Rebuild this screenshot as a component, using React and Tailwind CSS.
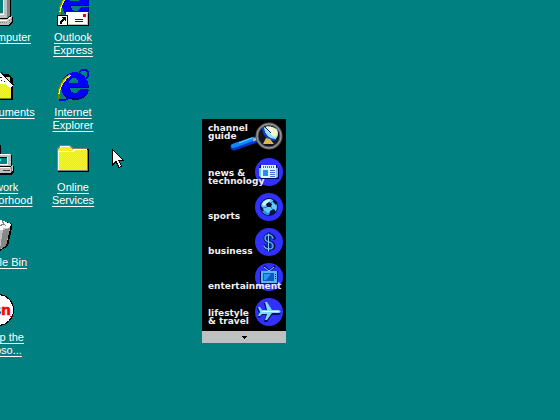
import React from "react";

const svgProps = {
  width: 32,
  height: 32,
  viewBox: "0 0 32 32",
  shapeRendering: "crispEdges",
  "aria-hidden": true,
};

function Dither({ id, a, b }) {
  return (
    <defs>
      <pattern id={id} width="2" height="2" patternUnits="userSpaceOnUse">
        <rect width="2" height="2" fill={a} />
        <rect width="1" height="1" fill={b} />
        <rect x="1" y="1" width="1" height="1" fill={b} />
      </pattern>
    </defs>
  );
}

function ExplorerMark() {
  return (
    <>
      <path d="M22 3 L25 1 L29 1 L31 3 L31 7 L29 10" fill="none" stroke="#0000d0" strokeWidth="1.5" />
      <path
        fillRule="evenodd"
        fill="#000090"
        d="M18 4 C26 4 32 10 32 19 H13 V20 Q14 24 18 24 Q21 24 23 21 H32 C31 27 26 31 18 31 C9 31 4 26 4 18 C4 9 10 4 18 4 Z M11 14 H22 Q22 9 17 9 Q12 9 11 14 Z"
      />
      <path
        fillRule="evenodd"
        fill="#0000ff"
        d="M18 3 C26 3 31 9 31 18 H12 Q12 24 18 24 Q21 24 23 20 H31 C30 26 25 29 18 29 C9 29 4 25 4 17 C4 9 10 3 18 3 Z M12 14 H21 Q21 9 17 9 Q13 9 12 14 Z"
      />
      <path d="M2 31 L8 31 L12 29" fill="none" stroke="#0000d0" strokeWidth="1.5" />
      <path d="M13 5 Q3 11 1 20 L1 28 L2 31 L3 28 L3 22 Q6 13 13 5Z" fill="#808000" />
      <path d="M14 6 Q9 9 6 14 L3 20 L2 25" fill="none" stroke="#ffff40" strokeWidth="1.2" />
      <path d="M13 6 Q8 9 4 16" fill="none" stroke="#c0c000" strokeWidth="1" />
    </>
  );
}

function ComputerIcon() {
  return (
    <svg {...svgProps}>
      <path d="M5 2 H26 L29 5 V22 L26 25 H5Z" fill="#000" />
      <path d="M4 1 H25 L28 4 V21 L25 24 H4Z" fill="#808080" />
      <path d="M4 1 H25 V24 H4Z" fill="#c0c0c0" />
      <path d="M4 2 H24 M5 1 V23" stroke="#fff" />
      <rect x="8" y="5" width="13" height="14" fill="#008080" />
      <path d="M21 4 V20 H8" fill="none" stroke="#fff" />
      <path d="M8 20 V5 H20" fill="none" stroke="#404040" />
      <path d="M2 26 H27 L31 23 V29 L27 32 H2Z" fill="#000" />
      <path d="M2 25 H26 L30 22 V28 L26 31 H2Z" fill="#c0c0c0" />
      <path d="M2 26 H25 L29 23" fill="none" stroke="#fff" />
      <path d="M14 28 H25 M27 26 V30 M29 25 V28" stroke="#808080" strokeDasharray="1 1" />
    </svg>
  );
}

function OutlookIcon() {
  return (
    <svg {...svgProps}>
      <g transform="translate(1 -7)">
        <ExplorerMark />
      </g>
      <rect x="10" y="19" width="22" height="13" fill="#000" />
      <rect x="9" y="18" width="22" height="13" fill="#fff" />
      <path d="M10 30.500 H31 M30.500 19 V31" stroke="#c0c0c0" />
      <rect x="26" y="20" width="3" height="3" fill="#f00" />
      <path d="M18 25.500 H26 M18 27.500 H26" stroke="#0000ff" />
      <rect x="0" y="21" width="11" height="11" fill="#000" />
      <rect x="1" y="22" width="9" height="9" fill="#fff" />
      <path d="M4 23 H9 V28 L7 26 L5 28 V30 H3 V27 L6 25Z" fill="#000" />
    </svg>
  );
}

function DocumentsIcon() {
  return (
    <svg {...svgProps}>
      <Dither id="docs" a="#f8f430" b="#d4d4b8" />
      <path d="M4 5 H27 L31 10 V31 H4Z" fill="#000" />
      <path d="M3 8 H28 V30 H3Z" fill="#d8d860" />
      <path d="M8 3 L19 4 L26 12 L31 16 L28 20 L10 16Z" fill="#fff" />
      <path d="M19 3 L26 11 L32 16" fill="none" stroke="#000" />
      <path d="M17 7 L20 9 M17 10 L23 13" stroke="#0000ff" strokeDasharray="1 1" />
      <path d="M3 15 H23 L27 18 H29 V30 H3Z" fill="url(#docs)" />
      <path d="M27 13 L31 16 L28 19 L27 17Z" fill="#fff" />
      <path d="M3 14.500 H22" fill="none" stroke="#fff" />
      <path d="M3 29.500 H29" stroke="#808000" />
    </svg>
  );
}

function ExplorerIcon() {
  return (
    <svg {...svgProps}>
      <ExplorerMark />
    </svg>
  );
}

function NetworkIcon() {
  return (
    <svg {...svgProps}>
      <path d="M3 2 H18 V14 H3Z" fill="#c0c0c0" />
      <path d="M18.500 1 V10" stroke="#000" />
      <path d="M10 11 H30 V23 H10Z" fill="#000" />
      <path d="M10 10 H28 L29 11 V22 H10Z" fill="#c0c0c0" />
      <path d="M10 10.500 H28" stroke="#fff" />
      <rect x="12" y="13" width="13" height="7" fill="#008080" />
      <path d="M12 20 V13 H25" fill="none" stroke="#000" />
      <path d="M25.500 13 V20.500 H13" fill="none" stroke="#fff" />
      <rect x="17" y="15" width="2" height="2" fill="#00ffff" />
      <path d="M8 24 H29 L32 22 V28 L29 31 H8Z" fill="#000" />
      <path d="M8 23 H28 L31 21 V27 L28 29 H8Z" fill="#c0c0c0" />
      <path d="M8 23.500 H28" stroke="#fff" />
      <path d="M21 26.500 H28" stroke="#404040" />
      <path d="M29.500 23 V28" stroke="#808080" />
    </svg>
  );
}

function FolderIcon() {
  return (
    <svg {...svgProps}>
      <Dither id="folder" a="#f8f430" b="#d4d4b8" />
      <path d="M1 5 L4 2 H14 L17 5 H31 L32 6 V28 H1Z" fill="#000" />
      <path d="M0 5 L3 1 H13 L16 4 H30 V27 H0Z" fill="#808080" />
      <path d="M1 5 L4 2 H12 L15 5 H30 V26 H1Z" fill="url(#folder)" />
      <path d="M1.500 26 V7.500 H16 L18 5.500 H30 M3 3.500 L4 2.500 H12" fill="none" stroke="#fff" />
      <path d="M1 26.500 H31 M30.500 6 V27" stroke="#808080" />
    </svg>
  );
}

function BinIcon() {
  return (
    <svg {...svgProps}>
      <path d="M3 7 L10 3 L19 1 L30 5 L30 9 L26 27 L18 32 L7 29Z" fill="#000" />
      <path d="M3 7 L10 3 L19 1 L29 5 L28 10 L24 27 L17 31 L7 28Z" fill="#c0c0c0" />
      <path d="M21 11 L28 9 L24 27 L18 30Z" fill="#888888" />
      <path d="M4 7 L10 3 L19 1 L29 5 L28 8 L20 11Z" fill="#fff" />
      <path d="M17 7 L22 5 L24 7 M20 2 L22 5" fill="none" stroke="#808080" />
      <path d="M21 9.500 H26" stroke="#c0c0c0" />
    </svg>
  );
}

function MsnIcon() {
  return (
    <svg {...svgProps}>
      <circle cx="16" cy="16" r="16" fill="#000" />
      <circle cx="16" cy="16" r="15" fill="#fff" />
      <g fontFamily="'DejaVu Sans', sans-serif" fontWeight="bold" fontSize="14">
        <text x="11" y="21">s</text>
        <text x="19" y="21" fill="#f00" stroke="#f00" strokeWidth="0.5">n</text>
      </g>
      <rect x="28" y="22" width="1" height="1" fill="#f00" />
    </svg>
  );
}

const shortcuts = [
  { label: ["My Computer"], Icon: ComputerIcon },
  { label: ["Outlook", "Express"], Icon: OutlookIcon },
  { label: ["My Documents"], Icon: DocumentsIcon },
  { label: ["Internet", "Explorer"], Icon: ExplorerIcon },
  { label: ["Network", "Neighborhood"], Icon: NetworkIcon },
  { label: ["Online", "Services"], Icon: FolderIcon },
  { label: ["Recycle Bin"], Icon: BinIcon },
  null,
  { label: ["Set Up the", "Microso..."], Icon: MsnIcon },
];

function Shortcut({ label, Icon }) {
  return (
    <a href="#" className="flex flex-col items-center gap-[5px] text-center text-[11px] leading-[13px] whitespace-nowrap text-white underline underline-offset-2">
      <Icon />
      <span>
        {label.map((line) => (
          <span key={line} className="block">{line}</span>
        ))}
      </span>
    </a>
  );
}

function Disc({ children }) {
  return (
    <svg width="28" height="28" viewBox="0 0 28 28" aria-hidden="true">
      <circle cx="14" cy="14" r="14" fill="#3030ff" />
      {children}
    </svg>
  );
}

function GuideArt() {
  return (
    <svg width="54" height="30" viewBox="0 0 54 30" aria-hidden="true">
      <path d="M5 26 L25 19" stroke="#0038c0" strokeWidth="7" strokeLinecap="round" />
      <path d="M4 25 L24 18" stroke="#1088ff" strokeWidth="4" strokeLinecap="round" />
      <path d="M10 22 L23 17" stroke="#70d8ff" strokeWidth="1" />
      <path d="M24 19 L30 17" stroke="#b0b0b0" strokeWidth="3" />
      <circle cx="40" cy="15" r="12" fill="#141420" stroke="#606060" strokeWidth="3" />
      <circle cx="40" cy="15" r="12" fill="none" stroke="#a0a0a0" strokeWidth="1" />
      <path d="M34 7 Q40 3 48 8 Q51 14 46 19 Q38 18 34 7Z" fill="#90e0f0" />
      <path d="M36 6 Q43 4 48 10 Q49 14 46 16 Q41 14 36 6Z" fill="#f4f4c8" />
      <path d="M34 7 Q35 18 46 19" fill="none" stroke="#1040c0" strokeWidth="2" />
      <path d="M37 17 L34 23 H45 L41 18Z" fill="#d8b850" />
      <path d="M42 12 L35 5" stroke="#102060" strokeWidth="1" />
    </svg>
  );
}

function NewsArt() {
  return (
    <Disc>
      <path d="M5 7 H22 V10 H24 V21 H6 L4 19 V11Z" fill="#000060" />
      <path d="M6 7 H21 V20 H6Z" fill="#d8f4ff" />
      <path d="M21 10 H23 V19 L21 20Z M4 10 H6 V20 L4 18Z" fill="#70c8f8" />
      <path d="M8 9 H20" stroke="#4068c0" strokeWidth="2" strokeDasharray="1 1" />
      <rect x="8" y="12" width="5" height="6" fill="#2090e8" />
      <path d="M15 12.500 H20 M15 14.500 H20 M15 16.500 H20 M15 18.500 H20" stroke="#4070d0" />
    </Disc>
  );
}

function SportsArt() {
  return (
    <Disc>
      <circle cx="14" cy="14" r="9" fill="#001040" />
      <circle cx="14" cy="14" r="8" fill="#68c8f8" />
      <path d="M7 11 Q10 6 16 6 L13 10 L9 13Z" fill="#c8f4ff" />
      <path d="M11 11 L14 9 L17 11 L16 14 L12 14Z M6 13 L8 15 L9 19 L6 17Z M18 6 L22 9 L21 12 L18 9Z M15 18 L19 16 L21 19 L17 22 L14 22Z" fill="#001040" />
      <path d="M8 15 L12 14 M16 10 L18 8 M16 14 L18 17" stroke="#1870c0" />
      <path d="M9 18 Q11 21 14 21" fill="none" stroke="#2090e8" strokeWidth="2" />
    </Disc>
  );
}

function BusinessArt() {
  return (
    <Disc>
      <g fill="none" strokeLinecap="square">
        <path d="M19 10 Q18 7 14 7 Q10 7 10 10 Q10 13 14 14 Q19 15 19 18 Q19 21 14 21 Q10 21 10 18 M14 6 V22" stroke="#001050" strokeWidth="3" />
        <path d="M18 10 Q17 7 14 7 Q10 7 10 10 Q10 13 14 14 Q18 15 18 18 Q18 21 14 21 Q10 21 9 18" stroke="#50a8e8" strokeWidth="1.5" />
        <path d="M13.500 6 V23" stroke="#78d0f8" strokeWidth="1" />
      </g>
    </Disc>
  );
}

function EntertainmentArt() {
  return (
    <Disc>
      <path d="M9 3 L14 8 L20 3" fill="none" stroke="#001050" strokeWidth="2" />
      <path d="M9 4 L14 8 L19 4" fill="none" stroke="#90e0ff" strokeWidth="1" />
      <rect x="5" y="8" width="18" height="13" fill="#001050" />
      <rect x="6" y="8" width="16" height="12" fill="#58b8f0" />
      <rect x="8" y="10" width="11" height="8" fill="#1058c0" />
      <path d="M9 11 H16 L11 17 H9Z" fill="#2898f0" />
      <path d="M20.500 11 V17" stroke="#001050" strokeDasharray="1 1" />
    </Disc>
  );
}

function TravelArt() {
  return (
    <Disc>
      <path d="M3 9 L6 13 H11 L9 5 H12 L17 12 L24 13 L26 15 L24 17 H17 L12 24 H9 L11 17 H7 L4 20 L3 19 L4 15 L2 10Z" fill="#001050" />
      <path d="M3 9 H5 L7 12 H12 L10 4 H12 L17 12 L24 12 L26 14 L24 15 H17 L12 22 H10 L12 16 H7 L5 18 H3 L5 14Z" fill="#80d8f8" />
      <path d="M7 13.500 H24" stroke="#d8f8ff" />
    </Disc>
  );
}

const channels = [
  { label: ["channel", "guide"], Art: GuideArt, text: "self-start pt-[5px]", art: "pt-[2px]" },
  { label: ["news &", "technology"], Art: NewsArt },
  { label: ["sports"], Art: SportsArt },
  { label: ["business"], Art: BusinessArt },
  { label: ["entertainment"], Art: EntertainmentArt },
  { label: ["lifestyle", "& travel"], Art: TravelArt },
];

function Channel({ label, Art, text = "self-end pb-[4px]", art = "pt-[4px]" }) {
  return (
    <a href="#" className="grid h-[35px] grid-cols-1 grid-rows-1 pr-[3px] pl-[6px]">
      <span className={`col-start-1 row-start-1 justify-self-end ${art}`}>
        <Art />
      </span>
      <span className={`z-10 col-start-1 row-start-1 text-[9px] leading-[8px] font-bold whitespace-nowrap text-[#f0f0f0] font-['DejaVu_Sans',sans-serif] ${text}`}>
        {label.map((line) => (
          <span key={line} className="block">{line}</span>
        ))}
      </span>
    </a>
  );
}

function ChannelBar() {
  return (
    <nav aria-label="Channels" className="absolute top-[119px] left-[202px] w-[84px] bg-black">
      <div className="pb-[2px]">
        {channels.map((c) => (
          <Channel key={c.label[0]} {...c} />
        ))}
      </div>
      <button type="button" aria-label="Scroll down" className="flex h-3 w-full items-center justify-center bg-[#c0c0c0]">
        <svg width="5" height="3" viewBox="0 0 5 3" shapeRendering="crispEdges" aria-hidden="true">
          <path d="M0 0 H5 V1 H4 V2 H3 V3 H2 V2 H1 V1 H0Z" />
        </svg>
      </button>
    </nav>
  );
}

function Pointer() {
  return (
    <svg className="absolute top-[149px] left-[112px]" width="12" height="20" viewBox="0 0 12 20" shapeRendering="crispEdges" aria-hidden="true">
      <path d="M0.500 0.500 V16 L4 12.500 L7 18.500 L9.500 17.500 L7 11.500 H11.500Z" fill="#fff" stroke="#000" />
    </svg>
  );
}

export default function App() {
  return (
    <main className="relative h-screen overflow-hidden bg-[#008080] font-['Liberation_Sans',Arial,sans-serif]">
      <div className="-mt-[6px] -ml-[39px] grid auto-rows-[75px] grid-cols-[74px_74px] gap-x-px">
        {shortcuts.map((s, i) => (s ? <Shortcut key={s.label[0]} {...s} /> : <span key={i} />))}
      </div>
      <ChannelBar />
      <Pointer />
    </main>
  );
}
